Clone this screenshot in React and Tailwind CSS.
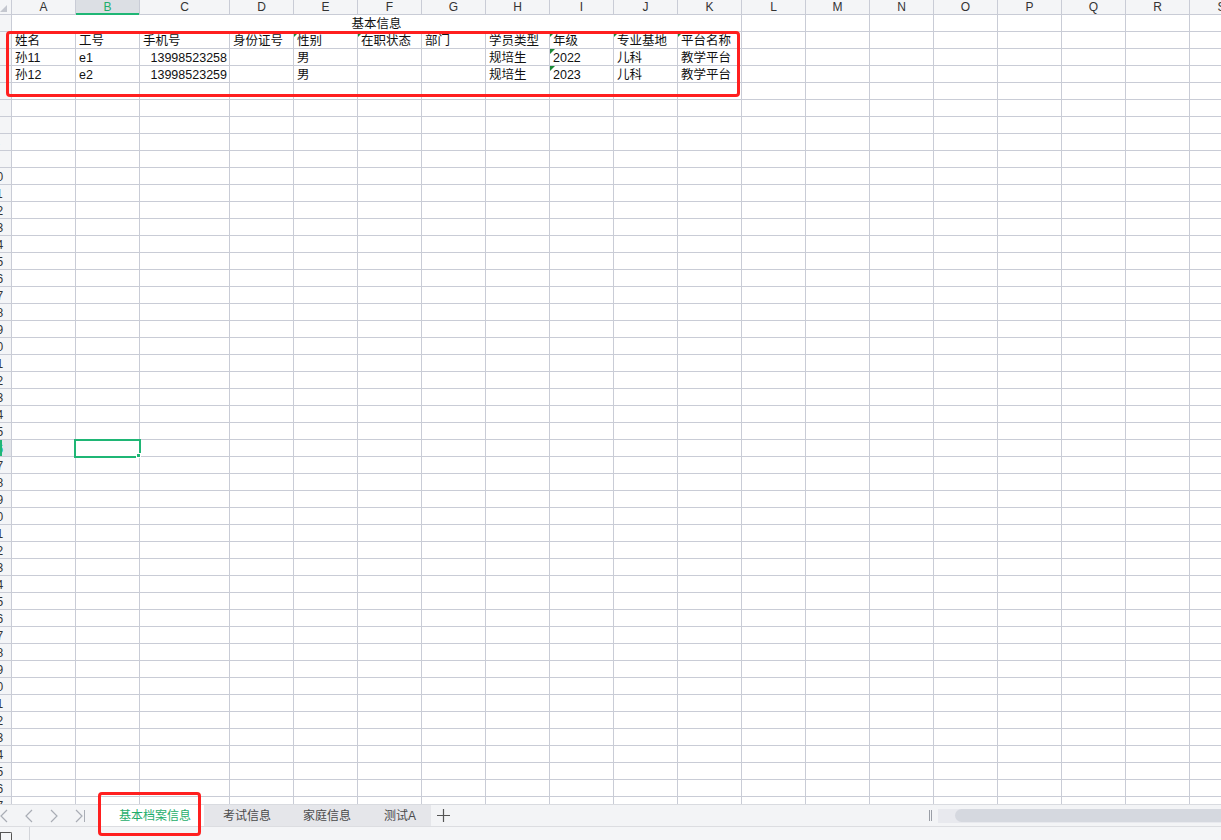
import React from 'react';

// 表格列定义：C 列较宽，其余统一 64px（含右边框）
const COLS = ['A', 'B', 'C', 'D', 'E', 'F', 'G', 'H', 'I', 'J', 'K', 'L', 'M', 'N', 'O', 'P', 'Q', 'R', 'S'];
const colWidth = (c) => (c === 'C' ? 'w-[90px]' : 'w-[64px]');

const ROW_COUNT = 47;
const ACTIVE_ROW = 26;
const ACTIVE_COL = 'B';

// 单元格数据（行号 -> 列 -> 值）
const SHEET = {
    2: { A: '姓名', B: '工号', C: '手机号', D: '身份证号', E: '性别', F: '在职状态', G: '部门', H: '学员类型', I: '年级', J: '专业基地', K: '平台名称' },
    3: { A: '孙11', B: 'e1', C: '13998523258', E: '男', H: '规培生', I: '2022', J: '儿科', K: '教学平台' },
    4: { A: '孙12', B: 'e2', C: '13998523259', E: '男', H: '规培生', I: '2023', J: '儿科', K: '教学平台' },
};

// 文本格式数字的绿色小三角
const FLAGGED = { 2: ['E', 'F', 'I', 'J', 'K'], 3: ['I'], 4: ['I'] };
const RIGHT_ALIGNED = { 3: ['C'], 4: ['C'] };

const GREEN = 'text-[#1fae6c]';

const Corner = () => (
    <div className="w-[12px] h-full shrink-0 border-r border-[#c9ccd6] bg-[#f4f5f7] relative overflow-hidden">
        <svg className="absolute left-0 top-[5px]" width="8" height="8" viewBox="0 0 8 8">
            <path d="M7 0 L7 7 L0 7 Z" fill="#c4c7cf" />
        </svg>
    </div>
);

const RowHeader = ({ n }) => {
    const active = n === ACTIVE_ROW;
    return (
        <div className={`w-[12px] h-full shrink-0 border-r border-[#c9ccd6] overflow-hidden relative ${active ? 'bg-[#e3e5ea]' : 'bg-[#f4f5f7]'}`}>
            <div className={`w-[29px] -ml-[18px] h-full pt-[1px] flex items-center justify-center text-[12px] ${active ? GREEN : 'text-[#333]'}`}>{n}</div>
            {active && <div className="absolute left-0 top-0 bottom-0 w-[2px] bg-[#1fb675]" />}
        </div>
    );
};

const Cell = ({ row, col }) => {
    const value = SHEET[row]?.[col];
    const flagged = FLAGGED[row]?.includes(col);
    const right = RIGHT_ALIGNED[row]?.includes(col);
    const selected = row === ACTIVE_ROW && col === ACTIVE_COL;
    return (
        <div className={`${colWidth(col)} h-full shrink-0 border-r border-[#c9ccd6] relative flex items-center pt-[3px] whitespace-nowrap ${right ? 'justify-end pr-[2px]' : 'pl-[3px]'}`}>
            {flagged && <div className="absolute left-0 top-0 w-0 h-0 border-t-[5px] border-r-[5px] border-t-[#1a8a36] border-r-transparent" />}
            {value && <span className="text-[#111]">{value}</span>}
            {selected && (
                <div className="absolute -left-[2px] -top-[1px] w-[67px] h-[19px] border-2 border-[#1fb675] z-10">
                    <div className="absolute -right-[2px] -bottom-[2px] w-[5px] h-[5px] bg-[#1fb675] border border-white" />
                </div>
            )}
        </div>
    );
};

const ChevronLeft = () => (
    <svg width="8" height="14" viewBox="0 0 8 14"><path d="M7 1 L1 7 L7 13" fill="none" stroke="#a9adb5" strokeWidth="1.2" /></svg>
);
const ChevronRight = () => (
    <svg width="8" height="14" viewBox="0 0 8 14"><path d="M1 1 L7 7 L1 13" fill="none" stroke="#a9adb5" strokeWidth="1.2" /></svg>
);

const SheetTabs = () => (
    <div className="h-[22px] shrink-0 flex items-stretch bg-[#f3f4f6] border-t border-[#d9dbe0] text-[12px] relative">
        {/* 工作表导航 */}
        <div className="w-[100px] shrink-0 flex items-center">
            <div className="w-[25px] flex"><ChevronLeft /></div>
            <div className="w-[25px] flex"><ChevronLeft /></div>
            <div className="w-[25px] flex"><ChevronRight /></div>
            <div className="w-[25px] flex items-center gap-[1px]">
                <ChevronRight />
                <div className="w-[1px] h-[12px] bg-[#a9adb5]" />
            </div>
        </div>
        <div className={`w-[104px] shrink-0 bg-white pl-[6px] flex items-center justify-center ${GREEN}`}>基本档案信息</div>
        <div className="shrink-0 flex bg-[#e5e6ea] text-[#4a4a4a]">
            <div className="w-[86px] flex items-center justify-center">考试信息</div>
            <div className="w-[74px] flex items-center justify-center">家庭信息</div>
            <div className="w-[67px] pl-[5px] flex items-center justify-center">测试A</div>
        </div>
        <div className="w-[24px] shrink-0 flex items-center justify-center">
            <svg width="13" height="13" viewBox="0 0 13 13"><path d="M6.5 0 V13 M0 6.5 H13" stroke="#555" strokeWidth="1.2" /></svg>
        </div>
        <div className="flex-1" />
        {/* 横向滚动条 */}
        <div className="w-[292px] shrink-0 flex items-center">
            <div className="w-[9px] flex gap-[1px]">
                <div className="w-[1px] h-[11px] bg-[#9a9ea6]" />
                <div className="w-[1px] h-[11px] bg-[#9a9ea6]" />
            </div>
            <div className="flex-1 h-[14px] bg-[#e8e9ee] flex items-center overflow-hidden">
                <svg className="ml-[7px]" width="5" height="8" viewBox="0 0 5 8"><path d="M5 0 L0 4 L5 8 Z" fill="#7f8796" /></svg>
                <div className="ml-[10px] h-[13px] w-[400px] shrink-0 rounded-full bg-[#d5d8df]" />
            </div>
        </div>
    </div>
);

const StatusBar = () => (
    <div className="h-[14px] shrink-0 flex bg-[#f4f5f7] border-t border-[#dcdde1]">
        <div className="w-[30px] shrink-0 border-r border-[#d3d5da] pt-[5px]">
            <div className="w-[12px] h-[9px] border border-[#555] border-b-0 rounded-tr-[2px]" />
        </div>
    </div>
);

export default function App() {
    const rows = Array.from({ length: ROW_COUNT }, (_, i) => i + 1);
    return (
        <div className="w-[1221px] h-[840px] flex flex-col bg-white overflow-hidden font-['Liberation_Sans','Noto_Sans_CJK_SC',sans-serif] text-[12.5px] leading-none">
            <div className="flex-1 overflow-hidden relative">
                {/* 列标题 */}
                <div className="flex h-[15px] border-b border-[#c9ccd6]">
                    <Corner />
                    {COLS.map((c) => (
                        <div
                            key={c}
                            className={`${colWidth(c)} h-full shrink-0 border-r border-[#c9ccd6] flex items-center justify-center text-[12px] relative ${c === ACTIVE_COL ? `bg-[#dcdfe4] ${GREEN}` : 'bg-[#f4f5f7] text-[#333]'}`}
                        >
                            {c}
                            {c === ACTIVE_COL && <div className="absolute left-0 right-0 -bottom-[1px] h-[2px] bg-[#1fb675]" />}
                        </div>
                    ))}
                </div>

                {rows.map((n) => (
                    <div key={n} className="flex h-[17px] border-b border-[#c9ccd6]">
                        <RowHeader n={n} />
                        {n === 1 ? (
                            <>
                                <div className="w-[730px] h-full shrink-0 border-r border-[#c9ccd6] pt-[3px] flex items-center justify-center text-[#111]">基本信息</div>
                                {COLS.slice(11).map((c) => (
                                    <Cell key={c} row={n} col={c} />
                                ))}
                            </>
                        ) : (
                            COLS.map((c) => <Cell key={c} row={n} col={c} />)
                        )}
                    </div>
                ))}

                {/* 标注框 */}
                <div className="absolute left-[6px] top-[31px] w-[734px] h-[66px] border-[3px] border-[#ff1f1f] rounded-[4px] pointer-events-none" />
            </div>

            <SheetTabs />
            <StatusBar />

            <div className="absolute left-[98px] top-[792px] w-[103px] h-[44px] border-[3px] border-[#ff1f1f] rounded-[4px] pointer-events-none" />
        </div>
    );
}
